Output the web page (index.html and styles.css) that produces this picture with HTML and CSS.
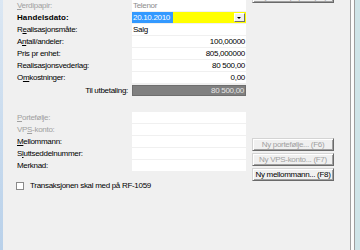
FILE: index.html
```html
<!DOCTYPE html>
<html lang="no">
<head>
  <meta charset="UTF-8">
  <title>Salg av verdipapir</title>
  <link rel="stylesheet" href="styles.css">
</head>
<body>
  <div class="window">
    <div class="edge-left"></div>
    <div class="panel">
      <div class="form">
        <div class="grid">
          <div class="label disabled"><u>V</u>erdipapir:</div>
          <div class="field muted">Telenor</div>
          <div class="label strong">Handelsdato:</div>
          <div class="combo"><span class="sel">20.10.2010</span><span class="drop"><span class="arrow"></span></span></div>
          <div class="label">R<u>e</u>alisasjonsmåte:</div>
          <div class="field">Salg</div>
          <div class="label">A<u>n</u>tall/andeler:</div>
          <div class="field num">100,00000</div>
          <div class="label">Pris pr enhet:</div>
          <div class="field num">805,000000</div>
          <div class="label">Realisasjonsvederlag:</div>
          <div class="field num">80 500,00</div>
          <div class="label">O<u>m</u>kostninger:</div>
          <div class="field num">0,00</div>
        </div>
        <div class="grid total-row">
          <div class="label right">Til utbetaling:</div>
          <div class="field total num">80 500,00</div>
        </div>
        <div class="grid extra">
          <div class="label disabled"><u>P</u>ortefølje:</div>
          <div class="field"></div>
          <div class="label disabled">VP<u>S</u>-konto:</div>
          <div class="field"></div>
          <div class="label"><u>M</u>ellommann:</div>
          <div class="field"></div>
          <div class="label">S<u>l</u>uttseddelnummer:</div>
          <div class="field"></div>
          <div class="label">Merknad:</div>
          <div class="field"></div>
        </div>
        <div class="check">
          <span class="box"></span>
          <span>Transaksjonen skal med på RF-1059</span>
        </div>
      </div>
      <div class="buttons">
        <button class="btn cut" disabled>Nytt verdipapir... (F4)</button>
        <div class="stack">
          <button class="btn" disabled>Ny portefølje... (F6)</button>
          <button class="btn" disabled>Ny VPS-konto... (F7)</button>
          <button class="btn">Ny mellommann... (F8)</button>
        </div>
      </div>
    </div>
    <div class="edge-right"></div>
  </div>
</body>
</html>
```

FILE: styles.css
```css
body {
  margin: 0;
  background: #f0f0f0;
  font-family: 'Liberation Sans', Arial, sans-serif;
  font-size: 8px;
  letter-spacing: -0.3px;
  color: #000;
}
.window {
  display: flex;
  height: 250px;
  overflow: hidden;
}
.edge-left {
  width: 3px;
  background: linear-gradient(#dbe7f3, #b9d1ea);
}
.panel {
  width: 334px;
  padding-left: 14px;
  display: flex;
}
.form {
  width: 229px;
}
.grid {
  display: grid;
  grid-template-columns: 115px 114px;
  grid-auto-rows: 11px;
  row-gap: 1px;
}
.label {
  line-height: 11px;
  white-space: nowrap;
}
.label.strong {
  font-weight: bold;
  letter-spacing: 0.1px;
}
.label.disabled {
  color: #a0a0a0;
}
.label.right {
  text-align: right;
  padding-right: 4px;
}
.field {
  background: #fff;
  line-height: 11px;
  padding: 0 1px;
  overflow: hidden;
  white-space: nowrap;
}
.field.muted {
  color: #8c8c8c;
}
.field.num {
  text-align: right;
}
.combo {
  background: #ffff00;
  display: flex;
  align-items: center;
  line-height: 11px;
}
.sel {
  background: #3399ff;
  color: #fff;
  width: 40px;
  padding-left: 1px;
}
.drop {
  margin-left: auto;
  margin-right: 1px;
  width: 11px;
  height: 9px;
  background: #f0f0f0;
  border: 1px solid;
  border-color: #fff #707070 #707070 #fff;
  box-sizing: border-box;
  display: flex;
  align-items: center;
  justify-content: center;
}
.arrow {
  width: 0;
  height: 0;
  border-left: 2px solid transparent;
  border-right: 2px solid transparent;
  border-top: 2px solid #000;
}
.total-row {
  margin-top: 2px;
}
.field.total {
  background: #808080;
  color: #e6e6e6;
  border: 1px solid #6e6e6e;
  line-height: 9px;
}
.extra {
  margin-top: 16px;
}
.check {
  display: flex;
  align-items: center;
  gap: 6px;
  margin-top: 10px;
  margin-left: -1px;
  line-height: 10px;
}
.box {
  width: 8px;
  height: 8px;
  background: #fff;
  border: 1px solid #8a8a8a;
  box-sizing: border-box;
}
.buttons {
  margin-left: 6px;
  width: 82px;
  display: flex;
  flex-direction: column;
}
.btn {
  height: 13px;
  width: 82px;
  padding: 0;
  font-family: inherit;
  font-size: 8px;
  letter-spacing: -0.3px;
  color: #000;
  background: #f0f0f0;
  border: 1px solid;
  border-color: #d4d4d4 #6a6a6a #6a6a6a #d4d4d4;
  box-shadow: inset 1px 1px #fff, inset -1px -1px #a0a0a0;
  line-height: 10px;
}
.btn:disabled {
  color: #a0a0a0;
}
.btn.cut {
  margin-top: -10px;
}
.stack {
  margin-top: 135px;
  display: flex;
  flex-direction: column;
  gap: 2px;
}
.edge-right {
  width: 9px;
  border-left: 1px solid #a0a0a0;
  background: linear-gradient(90deg, #fcfcfc 0 3px, #9e9e9e 3px 4px, #cfe4e8 4px);
}
```
